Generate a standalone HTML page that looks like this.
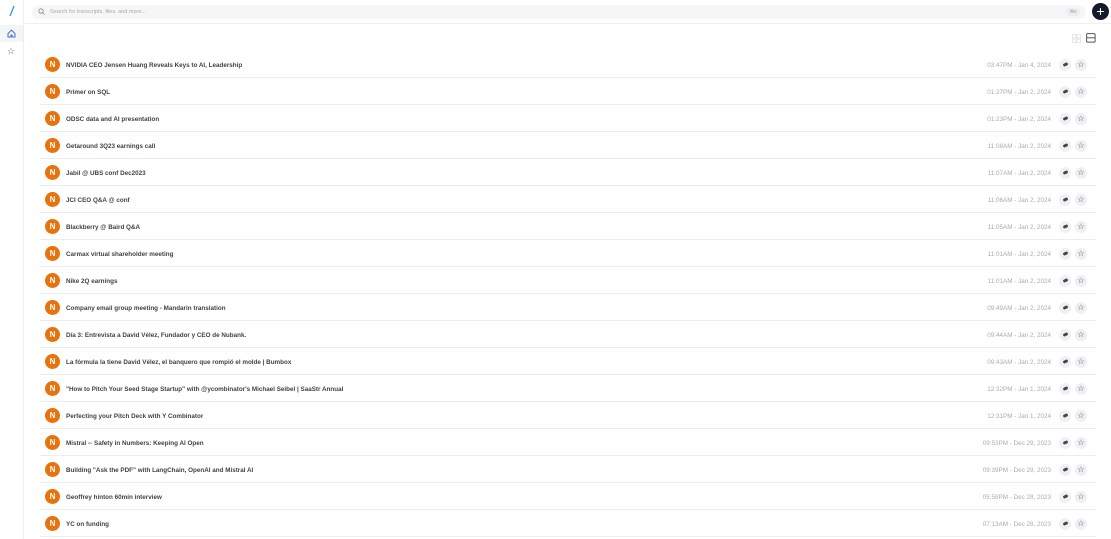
<!DOCTYPE html>
<html><head><style>
*{margin:0;padding:0;box-sizing:border-box}
body{width:1111px;height:539px;overflow:hidden;background:#fff;font-family:"Liberation Sans",sans-serif;position:relative}
.side{position:absolute;left:0;top:0;width:24px;height:539px;border-right:1px solid #eee}
.top{position:absolute;left:24px;top:0;right:0;height:24px;border-bottom:1px solid #f0f0f0}
.search{position:absolute;left:32px;top:5px;width:1054px;height:14px;background:#f5f6f8;border-radius:7px;font-size:5.5px;color:#aaa;line-height:14px;padding-left:18px}
.kbd{position:absolute;right:6px;top:3px;height:8px;line-height:8px;font-size:4.5px;padding:0 3px;background:#eceef1;border-radius:4px;color:#999}
.plus{position:absolute;left:1092px;top:3px;width:17px;height:17px;border-radius:50%;background:#151a28;color:#fff;font-size:14px;line-height:16px;text-align:center}
.row{position:absolute;left:40px;width:1056px;height:27px;border-bottom:1px solid #ececec}
.av{position:absolute;left:5px;top:6px;width:15px;height:15px;border-radius:50%;background:#e8720c;color:#fff;font-size:8px;font-weight:bold;line-height:15px;text-align:center}
.t{position:absolute;left:26px;top:10.5px;font-size:6.3px;line-height:7px;font-weight:bold;color:#3f424a}
.d{position:absolute;right:45px;top:10.5px;font-size:6.3px;line-height:7px;color:#a8abb2}
.ic{position:absolute;top:7.5px;width:12px;height:12px;border-radius:50%;background:#eef0f3}
.i1{left:1019px}.i2{left:1035px}
.i1:after{content:"";position:absolute;left:3.5px;top:4.5px;width:5px;height:3px;background:#444;border-radius:2px;transform:rotate(-25deg)}
.i2{font-size:8px;color:#444;text-align:center;line-height:12px}
</style></head><body>
<div class="side">
<svg style="position:absolute;left:8px;top:5px" width="8" height="12"><line x1="2" y1="11" x2="6" y2="1" stroke="#3aa0d8" stroke-width="1.4"/></svg>
<div style="position:absolute;left:0;top:25px;width:23px;height:17px;background:#f4f5f8"></div>
<svg style="position:absolute;left:7px;top:29px" width="9" height="9" viewBox="0 0 9 9"><path d="M1 4.5L4.5 1.2 8 4.5V8H1z" fill="none" stroke="#4a6fd8" stroke-width="1"/><rect x="3.5" y="5.5" width="2" height="2.5" fill="#4a6fd8"/></svg>
<div style="position:absolute;left:7px;top:46px;font-size:9px;color:#666">☆</div>
</div>
<div class="top"></div>
<div class="search"><svg style="position:absolute;left:6px;top:3px" width="7" height="7"><circle cx="3" cy="3" r="2.2" fill="none" stroke="#888" stroke-width=".8"/><line x1="4.6" y1="4.6" x2="6.5" y2="6.5" stroke="#888" stroke-width=".8"/></svg>Search for transcripts, files, and more...<span class="kbd">⌘K</span></div>
<div class="plus">+</div>
<svg style="position:absolute;left:1072px;top:34px" width="9" height="9"><rect x=".5" y=".5" width="3.5" height="3.5" fill="none" stroke="#ddd" stroke-width=".7"/><rect x="5" y=".5" width="3.5" height="3.5" fill="none" stroke="#ddd" stroke-width=".7"/><rect x=".5" y="5" width="3.5" height="3.5" fill="none" stroke="#ddd" stroke-width=".7"/><rect x="5" y="5" width="3.5" height="3.5" fill="none" stroke="#ddd" stroke-width=".7"/></svg>
<svg style="position:absolute;left:1086px;top:33px" width="10" height="10"><rect x=".6" y=".6" width="8.5" height="8.5" rx="1" fill="none" stroke="#555" stroke-width="1"/><line x1=".6" y1="4.8" x2="9" y2="4.8" stroke="#555" stroke-width="1"/></svg>
<div id="rows"></div>
<script>
var d=[["NVIDIA CEO Jensen Huang Reveals Keys to AI, Leadership","03:47PM - Jan 4, 2024"],["Primer on SQL","01:27PM - Jan 2, 2024"],["ODSC data and AI presentation","01:23PM - Jan 2, 2024"],["Getaround 3Q23 earnings call","11:08AM - Jan 2, 2024"],["Jabil @ UBS conf Dec2023","11:07AM - Jan 2, 2024"],["JCI CEO Q&A @ conf","11:06AM - Jan 2, 2024"],["Blackberry @ Baird Q&A","11:05AM - Jan 2, 2024"],["Carmax virtual shareholder meeting","11:01AM - Jan 2, 2024"],["Nike 2Q earnings","11:01AM - Jan 2, 2024"],["Company email group meeting - Mandarin translation","09:49AM - Jan 2, 2024"],["Día 3: Entrevista a David Vélez, Fundador y CEO de Nubank.","09:44AM - Jan 2, 2024"],["La fórmula la tiene David Vélez, el banquero que rompió el molde | Bumbox","09:43AM - Jan 2, 2024"],["\"How to Pitch Your Seed Stage Startup\" with @ycombinator's Michael Seibel | SaaStr Annual","12:32PM - Jan 1, 2024"],["Perfecting your Pitch Deck with Y Combinator","12:31PM - Jan 1, 2024"],["Mistral -- Safety in Numbers: Keeping AI Open","09:53PM - Dec 29, 2023"],["Building \"Ask the PDF\" with LangChain, OpenAI and Mistral AI","09:39PM - Dec 29, 2023"],["Geoffrey hinton 60min interview","05:58PM - Dec 28, 2023"],["YC on funding","07:13AM - Dec 28, 2023"]];
var h="";d.forEach(function(r,i){h+='<div class="row" style="top:'+(51+i*27)+'px"><div class="av">N</div><div class="t">'+r[0].replace(/&/g,"&amp;")+'</div><div class="d">'+r[1]+'</div><div class="ic i1"></div><div class="ic i2">☆</div></div>'});
document.getElementById("rows").innerHTML=h;
</script>
</body></html>
